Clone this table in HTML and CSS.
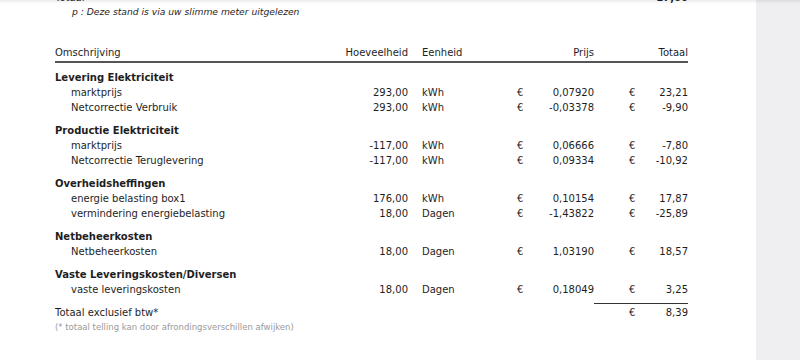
FILE: index.html
```html
<!DOCTYPE html>
<html lang="nl">
<head>
<meta charset="utf-8">
<title>Specificatie</title>
<link rel="stylesheet" href="styles.css">
</head>
<body>
<div class="page">
  <main class="sheet">
    <div class="prev">
      <span>Totaal</span>
      <span class="prev-val">17,60</span>
    </div>
    <p class="note">p : Deze stand is via uw slimme meter uitgelezen</p>

    <table class="spec">
      <colgroup>
        <col class="c-desc"><col class="c-qty"><col class="c-unit"><col class="c-eur"><col class="c-price"><col class="c-eur2"><col class="c-total">
      </colgroup>
      <thead>
        <tr>
          <th class="l">Omschrijving</th>
          <th class="r">Hoeveelheid</th>
          <th class="l unit">Eenheid</th>
          <th></th>
          <th class="r">Prijs</th>
          <th></th>
          <th class="r">Totaal</th>
        </tr>
      </thead>
      <tbody>
        <tr class="grp first"><td colspan="7">Levering Elektriciteit</td></tr>
        <tr><td class="item">marktprijs</td><td class="r">293,00</td><td class="unit">kWh</td><td>€</td><td class="r">0,07920</td><td class="eur2">€</td><td class="r">23,21</td></tr>
        <tr><td class="item">Netcorrectie Verbruik</td><td class="r">293,00</td><td class="unit">kWh</td><td>€</td><td class="r">-0,03378</td><td class="eur2">€</td><td class="r">-9,90</td></tr>

        <tr class="grp"><td colspan="7">Productie Elektriciteit</td></tr>
        <tr><td class="item">marktprijs</td><td class="r">-117,00</td><td class="unit">kWh</td><td>€</td><td class="r">0,06666</td><td class="eur2">€</td><td class="r">-7,80</td></tr>
        <tr><td class="item">Netcorrectie Teruglevering</td><td class="r">-117,00</td><td class="unit">kWh</td><td>€</td><td class="r">0,09334</td><td class="eur2">€</td><td class="r">-10,92</td></tr>

        <tr class="grp"><td colspan="7">Overheidsheffingen</td></tr>
        <tr><td class="item">energie belasting box1</td><td class="r">176,00</td><td class="unit">kWh</td><td>€</td><td class="r">0,10154</td><td class="eur2">€</td><td class="r">17,87</td></tr>
        <tr><td class="item">vermindering energiebelasting</td><td class="r">18,00</td><td class="unit">Dagen</td><td>€</td><td class="r">-1,43822</td><td class="eur2">€</td><td class="r">-25,89</td></tr>

        <tr class="grp"><td colspan="7">Netbeheerkosten</td></tr>
        <tr><td class="item">Netbeheerkosten</td><td class="r">18,00</td><td class="unit">Dagen</td><td>€</td><td class="r">1,03190</td><td class="eur2">€</td><td class="r">18,57</td></tr>

        <tr class="grp"><td colspan="7">Vaste Leveringskosten/Diversen</td></tr>
        <tr><td class="item">vaste leveringskosten</td><td class="r">18,00</td><td class="unit">Dagen</td><td>€</td><td class="r">0,18049</td><td class="eur2">€</td><td class="r">3,25</td></tr>

        <tr class="rule-row"><td colspan="5"></td><td colspan="2" class="rule"></td></tr>
        <tr class="sum"><td colspan="5">Totaal exclusief btw*</td><td class="eur2">€</td><td class="r">8,39</td></tr>
      </tbody>
    </table>
    <p class="foot">(* totaal telling kan door afrondingsverschillen afwijken)</p>
  </main>
  <aside class="side"></aside>
</div>
</body>
</html>
```

FILE: styles.css
```css
html, body {
  margin: 0;
  padding: 0;
  height: 100%;
  overflow: hidden;
}
body {
  font-family: "DejaVu Sans", Verdana, sans-serif;
  font-size: 10px;
  color: #1e1e1e;
  background: #ffffff;
}
.page {
  display: flex;
  height: 360px;
  position: relative;
}
.page::before {
  content: "";
  position: absolute;
  left: 0; right: 0; top: 0;
  height: 4px;
  background: linear-gradient(to bottom, rgba(0,0,0,0.08), rgba(0,0,0,0));
  pointer-events: none;
}
.sheet {
  width: 756px;
  flex: none;
  padding-left: 55px;
  box-sizing: border-box;
  background: #fff;
}
.side {
  flex: 1;
  background: #efeff1;
}
.prev {
  width: 633px;
  display: flex;
  justify-content: space-between;
  line-height: 15px;
  margin-top: -10px;
}
.prev-val { font-weight: bold; }
.note {
  margin: 0;
  padding-left: 17px;
  font-size: 9.2px;
  font-style: italic;
  line-height: 14px;
}
.spec {
  width: 633px;
  border-collapse: collapse;
  table-layout: fixed;
  margin-top: 26px;
}
.c-desc { width: 275px; }
.c-qty { width: 78px; }
.c-unit { width: 109px; }
.c-eur { width: 23px; }
.c-price { width: 54px; }
.c-eur2 { width: 51px; }
.c-total { width: 43px; }
.spec th, .spec td {
  padding: 0;
  white-space: nowrap;
  line-height: 15px;
  text-align: left;
}
.spec th {
  font-weight: normal;
  padding-bottom: 1px;
  border-bottom: 2px solid #555;
}
.spec .r { text-align: right; }
.spec .unit { padding-left: 14px; }
.spec .eur2 { padding-left: 35px; }
.spec .item { padding-left: 16px; }
.grp td {
  font-weight: bold;
  padding-top: 8px;
}
.grp.first td { padding-top: 7px; }
.rule-row td { height: 6px; line-height: 6px; }
.rule-row .rule { border-bottom: 1px solid #333; }
.sum td { padding-top: 1px; line-height: 15px; }
.foot {
  margin: 0;
  font-size: 8.5px;
  line-height: 15px;
  color: #9a9a9a;
}
```
